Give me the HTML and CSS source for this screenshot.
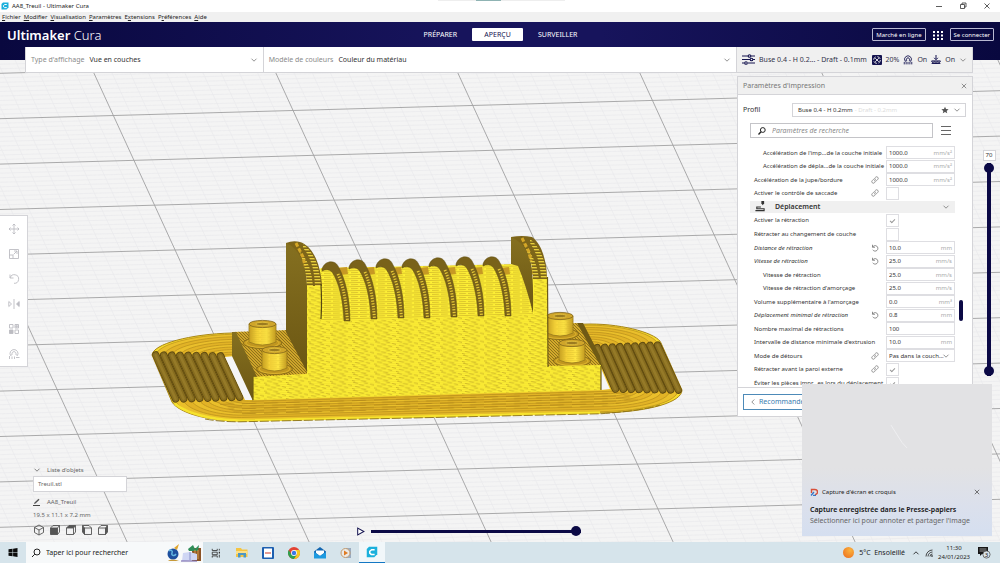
FILE: index.html
```html
<!DOCTYPE html>
<html lang="fr">
<head>
<meta charset="utf-8">
<title>AA8_Treuil - Ultimaker Cura</title>
<link rel="stylesheet" href="styles.css">
</head>
<body>
<svg class="defs" aria-hidden="true">
  <symbol id="chev" viewBox="0 0 8 8"><path d="M1.5 2.7 4 5.2 6.500 2.700" fill="none" stroke="currentColor" stroke-width=".8"/></symbol>
  <symbol id="close" viewBox="0 0 8 8"><path d="M1.800 1.800 6.200 6.200M6.200 1.800 1.800 6.200" fill="none" stroke="currentColor" stroke-width=".8"/></symbol>
  <symbol id="link" viewBox="0 0 16 16"><g fill="none" stroke="currentColor" stroke-width="1.500" stroke-linecap="round"><path d="M6.500 9.500a3 3 0 0 0 4.300 0l2.700-2.700a3 3 0 0 0-4.300-4.300L7.800 3.900"/><path d="M9.500 6.500a3 3 0 0 0-4.300 0L2.500 9.200a3 3 0 0 0 4.300 4.300l1.400-1.400"/></g></symbol>
  <symbol id="undo" viewBox="0 0 16 16"><path d="M3 1.500v5h5M3.300 6.300A5.500 5.500 0 1 1 3.500 11.500" fill="none" stroke="currentColor" stroke-width="1.700"/></symbol>
  <symbol id="cura" viewBox="0 0 16 16"><path d="M4 1h11v10l-4 4H1V4z" fill="#1bb0dc"/><path d="M11.500 5H7.500L5 7v2.500l2 1.700h4.500" fill="none" stroke="#fff" stroke-width="2"/></symbol>
  <symbol id="support" viewBox="0 0 16 16"><path d="M3.500 10a5.500 5.500 0 1 1 9 0L10 8.500a2.500 2.500 0 1 0-4 0zM2 11v4M5 10.500V15M8 11v4M11 10.500V15M14 11v4" fill="none" stroke="currentColor" stroke-width="1.400"/></symbol>
  <symbol id="adhesion" viewBox="0 0 16 16"><path d="M8 0v7M5 4.500 8 7.500 11 4.500M1 9.500c0 5 14 5 14 0zM4 9.500c0 2.500 8 2.500 8 0M1 13.500h14" fill="none" stroke="currentColor" stroke-width="1.600"/></symbol>
</svg>

<header class="titlebar">
  <svg class="ico8"><use href="#cura"/></svg>
  <span>AA8_Treuil - Ultimaker Cura</span>
  <div class="snap"><i></i></div>
  <div class="winbtns">
    <button aria-label="Réduire"><svg viewBox="0 0 8 8"><path d="M1 4.500h6"/></svg></button>
    <button aria-label="Restaurer"><svg viewBox="0 0 8 8"><path d="M1.500 2.500h4v4h-4zM3 2.500V1h4v4H5.500"/></svg></button>
    <button aria-label="Fermer"><svg viewBox="0 0 8 8"><path d="M1.500 1.500l5 5M6.500 1.500l-5 5"/></svg></button>
  </div>
</header>
<nav class="menubar">
  <a href="#"><u>F</u>ichier</a><a href="#"><u>M</u>odifier</a><a href="#"><u>V</u>isualisation</a><a href="#"><u>P</u>aramètres</a><a href="#">E<u>x</u>tensions</a><a href="#">P<u>r</u>éférences</a><a href="#"><u>A</u>ide</a>
</nav>

<div class="mainbar">
  <div class="logo"><b>Ultimaker</b> Cura</div>
  <nav class="stages"><button>PRÉPARER</button><button class="on">APERÇU</button><button>SURVEILLER</button></nav>
  <div class="account">
    <button>Marché en ligne</button>
    <svg class="apps" viewBox="0 0 10 10"><path d="M0 1h2v2H0zM4 1h2v2H4zM8 1h2v2H8zM0 4.500h2v2H0zM4 4.500h2v2H4zM8 4.500h2v2H8zM0 8h2v2H0zM4 8h2v2H4zM8 8h2v2H8z" fill="#fff"/></svg>
    <button>Se connecter</button>
  </div>
</div>

<main class="workspace">
  <svg id="scene" class="scene" viewBox="0 60 1000 483" preserveAspectRatio="xMinYMin slice" role="img" aria-label="Aperçu des couches du modèle"></svg>

  <div class="stagebar">
    <button class="cell view"><span class="muted">Type d'affichage</span><span>Vue en couches</span><svg class="ico8 end"><use href="#chev"/></svg></button>
    <button class="cell colors"><span class="muted">Modèle de couleurs</span><span>Couleur du matériau</span><svg class="ico8 end"><use href="#chev"/></svg></button>
    <button class="cell summary">
      <svg class="sliders" viewBox="0 0 13 11"><path d="M0 2h6M9 2h4M0 5.500h8M11 5.500h2M0 9h2.500M6 9h7" stroke="#14134f" stroke-width="1.200"/><g fill="none" stroke="#14134f" stroke-width="1.100"><circle cx="7.500" cy="2" r="1.300"/><circle cx="9.500" cy="5.500" r="1.300"/><circle cx="4" cy="9" r="1.300"/></g></svg>
      <span class="grow">Buse 0.4 - H 0.2... - Draft - 0.1mm</span>
      <svg class="ico10" viewBox="0 0 10 10"><rect width="10" height="10" rx="1" fill="#14134f"/><g fill="none" stroke="#f0f0f0" stroke-width=".9"><circle cx="5" cy="5" r="3.400" stroke-dasharray="3.600 1.740"/><path d="M3.200 3.200l3.600 3.600M6.800 3.200 3.200 6.800"/></g></svg>
      <span>20%</span>
      <svg class="ico10"><use href="#support"/></svg><span>On</span>
      <svg class="ico10"><use href="#adhesion"/></svg><span>On</span>
      <svg class="ico8"><use href="#chev"/></svg>
    </button>
  </div>

  <section class="left">
    <div class="tools">
      <button aria-label="Déplacer"><svg viewBox="0 0 12 12"><path d="M6 1v10M1 6h10M4.500 2.500 6 1l1.500 1.500M4.500 9.500 6 11l1.500-1.500M2.500 4.500 1 6l1.500 1.500M9.500 4.500 11 6 9.500 7.500"/></svg></button>
      <button aria-label="Mettre à l'échelle"><svg viewBox="0 0 12 12"><path d="M1.500 1.500h9v9h-9zM1.500 7h3.500v3.500M5.500 6.500 9 3M6 3h3v3"/></svg></button>
      <button aria-label="Tourner"><svg viewBox="0 0 12 12"><path d="M2 1.500V5h3.500M2.200 4.800A4.300 4.300 0 1 1 6 10.300"/></svg></button>
      <button aria-label="Miroir"><svg viewBox="0 0 12 12"><path d="M6 1v10M.8 3.500 3.500 6 .8 8.500z"/><path d="M11.200 3.500 8.500 6l2.700 2.500z" fill="#bcbcc2"/></svg></button>
      <button aria-label="Réglages par modèle"><svg viewBox="0 0 12 12"><path d="M1.500 1.500h3.500v3.500H1.500zM7 1.500h3.500v3.500H7zM7 7h3.500v3.500H7zM7 3.200h3.500M8.800 1.500v3.500"/><path d="M1.500 7h3.500v3.500H1.500z" fill="#bcbcc2"/></svg></button>
      <button aria-label="Bloqueur de supports"><svg viewBox="0 0 12 12"><path d="M2.500 7.500a4 4 0 1 1 7 0L7.800 6.500a2 2 0 1 0-3.600 0zM1.500 8v3M4 8.500V11M6.500 8.500V11M8 9.500h3.500"/></svg></button>
    </div>
    <div class="bottomrow">
      <div class="objects">
        <button class="objhead"><svg class="ico8"><use href="#chev"/></svg>Liste d'objets</button>
        <div class="objitem">Treuil.stl</div>
        <div class="objname"><svg class="ico8" viewBox="0 0 8 8"><path d="M0 7.500h7" stroke="#444"/><path d="M1 6 1.500 4.500 5.500.8l1 1-4 3.800z" fill="#555"/></svg>AA8_Treuil</div>
        <div class="dims">19.5 x 11.1 x 7.2 mm</div>
        <div class="cubes">
          <button aria-label="Vue 3D"><svg viewBox="0 0 12 12"><path d="M6 1l4.500 2.500v5L6 11 1.500 8.500v-5zM1.500 3.500 6 6l4.500-2.500M6 6v5"/></svg></button>
          <button aria-label="Vue de face"><svg viewBox="0 0 12 12"><path d="M1.500 4 4 1.500h6.500V8L8.500 10.500M8.500 4l2-2.500"/><path d="M1.500 4h7v6.500h-7z" fill="#555"/></svg></button>
          <button aria-label="Vue du dessus"><svg viewBox="0 0 12 12"><path d="M1.500 4v6.500h7V4M8.500 10.500l2-2.500V1.500"/><path d="M1.500 4 4 1.500h6.500L8.500 4z" fill="#555"/></svg></button>
          <button aria-label="Vue gauche"><svg viewBox="0 0 12 12"><path d="M3.500 4h7v6.500h-7zM1.500 1.500H8L10.500 4"/><path d="M1.500 1.500v6.500l2 2.500V4z" fill="#555"/></svg></button>
          <button aria-label="Vue droite"><svg viewBox="0 0 12 12"><path d="M1.500 4h7v6.500h-7zM1.500 4 4 1.500h6.500"/><path d="M10.500 1.500V8l-2 2.500V4z" fill="#555"/></svg></button>
        </div>
      </div>
      <div class="playbar">
        <button aria-label="Lecture"><svg viewBox="0 0 8 8"><path d="M1.500 1v6L7 4z" fill="#fff" stroke="#14134f" stroke-width=".9"/></svg></button>
        <input type="range" value="100" aria-label="Position dans la couche">
      </div>
    </div>
  </section>

  <section class="panel">
    <h2>Paramètres d'impression<button aria-label="Fermer le panneau"><svg class="ico8"><use href="#close"/></svg></button></h2>
    <div class="profile"><label for="profile">Profil</label>
      <button id="profile">Buse 0.4 - H 0.2mm <span class="ghost">- Draft - 0.2mm</span><svg class="ico8 star" viewBox="0 0 10 10"><path d="M5 .8 6.300 3.700l3.200.3-2.400 2.100.7 3.100L5 7.600 2.200 9.200l.7-3.100L.5 4l3.200-.3z" fill="#555"/></svg><svg class="ico8"><use href="#chev"/></svg></button>
    </div>
    <div class="searchrow">
      <div class="search"><svg class="ico8" viewBox="0 0 8 8"><circle cx="4.800" cy="3" r="2.400" fill="none" stroke="#222"/><path d="M3 4.800.5 7.500" stroke="#222" stroke-width="1.300"/></svg><input type="search" placeholder="Paramètres de recherche" aria-label="Paramètres de recherche"></div>
      <button class="burger" aria-label="Visibilité des paramètres"><svg viewBox="0 0 10 9"><path d="M0 .5h10M0 4.500h10M0 8.500h10" stroke="#666" stroke-width="1"/></svg></button>
    </div>
    <div class="listwrap">
      <div class="list">
        <div class="row sub"><label for="s1">Accélération de l'imp...de la couche initiale</label><div class="field"><input id="s1" value="1000.0"><span>mm/s²</span></div></div>
        <div class="row sub"><label for="s2">Accélération de dépla...de la couche initiale</label><div class="field"><input id="s2" value="1000.0"><span>mm/s²</span></div></div>
        <div class="row"><label for="s3">Accélération de la jupe/bordure</label><svg class="ico8"><use href="#link"/></svg><div class="field"><input id="s3" value="1000.0"><span>mm/s²</span></div></div>
        <div class="row"><label for="s4">Activer le contrôle de saccade</label><svg class="ico8"><use href="#link"/></svg><div class="tick"><input type="checkbox" id="s4"></div></div>
        <button class="category"><svg class="cat" viewBox="0 0 12 12"><path d="M1 10.500h9.500V8.500H2.500V6.500H7" fill="none" stroke="#333" stroke-width="1.200"/><path d="M7.500 0h3v2.500L9 4.500 7.500 2.500z" fill="#333"/></svg>Déplacement<svg class="ico8"><use href="#chev"/></svg></button>
        <div class="row"><label for="s5">Activer la rétraction</label><div class="tick"><input type="checkbox" id="s5" checked></div></div>
        <div class="row"><label for="s6">Rétracter au changement de couche</label><div class="tick"><input type="checkbox" id="s6"></div></div>
        <div class="row changed"><label for="s7">Distance de rétraction</label><svg class="ico8"><use href="#undo"/></svg><div class="field"><input id="s7" value="10.0"><span>mm</span></div></div>
        <div class="row changed"><label for="s8">Vitesse de rétraction</label><svg class="ico8"><use href="#undo"/></svg><div class="field"><input id="s8" value="25.0"><span>mm/s</span></div></div>
        <div class="row sub"><label for="s9">Vitesse de rétraction</label><div class="field"><input id="s9" value="25.0"><span>mm/s</span></div></div>
        <div class="row sub"><label for="s10">Vitesse de rétraction d'amorçage</label><div class="field"><input id="s10" value="25.0"><span>mm/s</span></div></div>
        <div class="row"><label for="s11">Volume supplémentaire à l'amorçage</label><div class="field"><input id="s11" value="0.0"><span>mm³</span></div></div>
        <div class="row changed"><label for="s12">Déplacement minimal de rétraction</label><svg class="ico8"><use href="#undo"/></svg><div class="field"><input id="s12" value="0.8"><span>mm</span></div></div>
        <div class="row"><label for="s13">Nombre maximal de rétractions</label><div class="field"><input id="s13" value="100"></div></div>
        <div class="row"><label for="s14">Intervalle de distance minimale d'extrusion</label><div class="field"><input id="s14" value="10.0"><span>mm</span></div></div>
        <div class="row"><label for="s15">Mode de détours</label><svg class="ico8"><use href="#link"/></svg><div class="field"><select id="s15"><option>Pas dans la couch...</option></select><svg class="ico8 drop"><use href="#chev"/></svg></div></div>
        <div class="row"><label for="s16">Rétracter avant la paroi externe</label><svg class="ico8"><use href="#link"/></svg><div class="tick"><input type="checkbox" id="s16" checked></div></div>
        <div class="row"><label for="s17">Éviter les pièces impr...es lors du déplacement</label><div class="tick"><input type="checkbox" id="s17" checked></div></div>
      </div>
      <div class="scroll"><i></i></div>
    </div>
    <footer><button><svg class="ico8 back"><use href="#chev"/></svg>Recommandé</button></footer>
  </section>

  <aside class="layers">
    <output for="layer">70</output>
    <div class="vtrack"><input id="layer" type="range" min="1" max="70" value="70" aria-label="Couche supérieure"></div>
  </aside>
</main>

<aside class="toast">
  <svg class="shot" viewBox="0 0 190 96" preserveAspectRatio="none"><path d="M89 38l11 16 5 5" stroke="#f1f1f3" stroke-width=".8" fill="none"/></svg>
  <div class="approw"><svg class="ico8" viewBox="0 0 8 8"><path d="M1.500 5V1.500H5a2 2 0 0 1 0 5" fill="none" stroke="#d8503a" stroke-width="1.400"/><path d="M1 7.500 4 4M3 7.500h3" stroke="#3576c8" stroke-width="1.300"/></svg><span>Capture d'écran et croquis</span><button aria-label="Ignorer"><svg class="ico8"><use href="#close"/></svg></button></div>
  <strong>Capture enregistrée dans le Presse-papiers</strong>
  <p>Sélectionner ici pour annoter et partager l'image</p>
</aside>

<footer class="taskbar">
  <button class="start" aria-label="Démarrer"><svg viewBox="0 0 10 10"><path d="M0 1.500 4.500.9v3.800H0zM5.100.8 10 0v4.700H5.100zM0 5.300h4.500v3.800L0 8.500zM5.100 5.300H10V10l-4.900-.8z" fill="#0a0a0a"/></svg></button>
  <div class="tsearch">
    <svg class="ico10" viewBox="0 0 10 10"><circle cx="6" cy="4" r="3" fill="none" stroke="#222"/><path d="M3.800 6.200 1 9" stroke="#222"/></svg>
    <input aria-label="Taper ici pour rechercher" placeholder="Taper ici pour rechercher">
    <svg class="art" viewBox="0 0 38 18"><path d="M9 4l5-4-2 6z" fill="#e0a52e"/><circle cx="8" cy="10" r="5.500" fill="#1d4f9e"/><path d="M4 7c2-2 4 0 3 2s2 4 4 1" stroke="#63b7e2" stroke-width="1.500" fill="none"/><path d="M3 17c3-2 8-1 11 0z" fill="#c79a3a"/><path d="M27 4h9v13h-9z" fill="#8b5426"/><path d="M23 5l5-4 2 4 4-4-1 6h-9z" fill="#2f8d58"/><path d="M30 6v9M33 6v9" stroke="#c99247" stroke-width="1.200"/><path d="M18 9l7-1 7 2v6l-15 1z" fill="#cfd6f4"/><path d="M25 8v8" stroke="#8b93cc"/><path d="M16 17h16" stroke="#6a5ba6"/></svg>
  </div>
  <div class="apprun">
    <button aria-label="Vue des tâches"><svg class="task" viewBox="0 0 12 12"><path d="M1.500 1v2h6V1M1.500 5h6v3h-6zM1.500 11.500v-2h6v2M10 1v2M10 8v3.500" fill="none" stroke="#333"/><path d="M9.300 4.500h1.500v2H9.300z" fill="#333"/></svg></button>
    <button aria-label="Explorateur"><svg viewBox="0 0 12 12"><path d="M0 1h5l1 1.500h5.500V10H0z" fill="#f5c542"/><path d="M0 4h11.500v3H0z" fill="#fbe08a"/><path d="M2 10.500V6h8v4.500H7.500V8h-3v2.500z" fill="#4d97c4"/></svg></button>
    <button aria-label="Agenda"><svg viewBox="0 0 12 12"><rect width="12" height="12" rx="1" fill="#1d5fb0"/><path d="M2 1.500h8v9H2z" fill="#fff"/><path d="M3 6h6" stroke="#d35a4a" stroke-width="1.200"/></svg></button>
    <button aria-label="Chrome"><svg viewBox="0 0 12 12"><circle cx="6" cy="6" r="6" fill="#e24334"/><path d="M.8 3A6 6 0 0 0 6 12l3-4.500L3.400 7.500z" fill="#2ea14f"/><path d="M6 12a6 6 0 0 0 5.200-9H6l3 4.500z" fill="#f8c921"/><circle cx="6" cy="6" r="2.900" fill="#fff"/><circle cx="6" cy="6" r="2.200" fill="#3b78e7"/></svg></button>
    <button aria-label="Courrier"><svg viewBox="0 0 12 12"><path d="M0 4.500 6 0l6 4.500V11H0z" fill="#1466b0"/><path d="M2 3.500h8v2.500L6 9 2 6z" fill="#fff"/><path d="M0 5l6 4 6-4v6.500H0z" fill="#1d9ae0"/></svg></button>
    <button aria-label="Lecteur"><svg viewBox="0 0 12 12"><path d="M6 1h5v10H6z" fill="#9aabc0"/><circle cx="5.500" cy="6" r="4.500" fill="#eceae6" stroke="#c09a70"/><path d="M4 3.500 8 6 4 8.500z" fill="#df7a22"/></svg></button>
    <button class="active" aria-label="Cura"><svg><use href="#cura"/></svg></button>
  </div>
  <div class="tray">
    <i class="sun"></i><span class="weather">5°C&ensp;Ensoleillé</span>
    <svg class="ico8 up"><use href="#chev"/></svg>
    <svg class="ico8" viewBox="0 0 8 8"><path d="M7.500 1A6.500 6.500 0 0 0 1 7.500M7.500 3A4.500 4.500 0 0 0 3 7.500M7.500 5A2.500 2.500 0 0 0 5 7.500" fill="none" stroke="#222" stroke-width=".8"/><circle cx="7" cy="7" r=".8"/></svg>
    <time>11:30<br>24/01/2023</time>
    <button class="notif" aria-label="Notifications"><svg viewBox="0 0 14 13"><path d="M1 1h10v7H5L3 10V8H1z" fill="#161616"/><path d="M2.500 3h7M2.500 5h7" stroke="#ccc" stroke-width=".7"/><circle cx="9.500" cy="8.500" r="3.600" fill="#dbe4e9" stroke="#555" stroke-width=".8"/><text x="9.500" y="10.500" font-size="6" text-anchor="middle" fill="#111">3</text></svg></button>
  </div>
</footer>
<script src="scene.js"></script>
</body>
</html>
```
FILE: styles.css
```css
:root{--navy:#0b0945;--line:#d4d4d8;--text:#333}
*{box-sizing:border-box}
body{margin:0;height:100vh;display:flex;flex-direction:column;overflow:hidden;font:6px/8px "Noto Sans","Open Sans",sans-serif;color:var(--text);background:#f4f4f4}
button,input,select{font:inherit;color:inherit;background:none;border:0;padding:0;margin:0;border-radius:0;min-width:0}
button{display:flex;align-items:center;justify-content:center}
svg{display:block;flex:none}
.defs{position:absolute;width:0;height:0}
.ico8{width:8px;height:8px}
.ico10{width:10px;height:10px}

.titlebar{height:12px;flex:none;display:flex;align-items:center;gap:3px;background:#fff;padding-left:1px;color:#222;position:relative}
.snap{position:absolute;top:0;left:438px;width:127px;height:1px;background:#eee;display:flex;justify-content:center}
.snap i{width:25px;height:1px;background:#8fb3b3;margin-right:26px}
.winbtns{margin-left:auto;display:flex;padding-right:1px}
.winbtns button{width:24px;height:12px}
.winbtns svg{width:8px;height:8px;fill:none;stroke:#333;stroke-width:.8}
.menubar{height:10px;flex:none;background:#f0f0f0;display:flex;align-items:center;gap:3px;padding-left:2px}
.menubar a{color:#222;text-decoration:none}

.mainbar{height:38px;flex:none;padding:0 6px 13px 7px;display:grid;grid-template-columns:1fr auto 1fr;align-items:center;color:#fff;background:linear-gradient(90deg,#09083f,#17145c 45%,#17145c 60%,#09083f)}
.logo{font:300 13px/20px "Noto Sans","Open Sans",sans-serif}
.logo b{font-weight:600}
.stages{display:flex;gap:15px;font-size:7px}
.stages button{height:13px}
.stages .on{background:#fff;color:#14134f;width:51px;border-radius:1px}
.account{display:flex;justify-content:flex-end;align-items:center;gap:7px}
.account button{height:13px;border:1px solid #b9b9d2;border-radius:1px;padding:0 3px}
.apps{width:10px;height:10px}

.workspace{flex:1;min-height:0;position:relative;display:grid;grid-template-columns:1fr 236px 27px;grid-template-rows:12px 1fr}
.scene{position:absolute;inset:0;width:100%;height:100%}
.stagebar{position:relative;grid-column:1/3;margin:-13px 0 0 25px;height:26px;display:grid;grid-template-columns:1fr 2fr 236px;border:1px solid var(--line);border-top:0;background:#fff;font-size:7px;z-index:1}
.cell{padding:0 5px;gap:5px;justify-content:flex-start;text-align:left;white-space:nowrap}
.cell+.cell{border-left:1px solid var(--line)}
.cell .ico8{color:#777}
.cell .end{margin-left:auto}
.muted{color:#8a8a8a}
.summary{background:#f0f0f0;gap:4px;color:#33334a}
.summary .grow{flex:1}
.summary .ico10{color:#14134f}
.sliders{width:13px;height:11px}

.left{position:relative;grid-column:1;grid-row:2;display:flex;flex-direction:column;justify-content:space-between;padding-top:143px}
.tools{width:28px;background:#fff;border:1px solid var(--line);border-left:0;display:grid;grid-auto-rows:25px}
.tools svg{width:12px;height:12px;fill:none;stroke:#bcbcc2;stroke-width:.9}
.bottomrow{display:flex;align-items:flex-end;gap:229px;padding:0 0 6px 33px}
.objects{width:94px;display:grid;color:#666}
.objhead{justify-content:flex-start;gap:6px;height:8px;margin-bottom:2px}
.objitem{height:16px;padding:3px 4px;background:#fff;border:1px solid var(--line)}
.objname{display:flex;align-items:center;gap:6px;height:19px}
.dims{height:13px;line-height:8px}
.cubes{display:flex;gap:4px}
.cubes svg{width:12px;height:12px;fill:none;stroke:#555;stroke-width:.9}
.playbar{display:flex;align-items:center;gap:6px;width:225px}
.playbar svg{width:9px;height:9px}
input[type=range]{appearance:none;height:10px;flex:1;margin:0;background:linear-gradient(var(--navy),var(--navy)) center/100% 3px no-repeat}
input[type=range]::-webkit-slider-thumb{appearance:none;width:10px;height:10px;border-radius:50%;background:var(--navy)}

.panel{position:relative;grid-column:2;grid-row:2;margin-top:4px;height:calc(60vh + 3px);background:#fff;border:1px solid var(--line);display:flex;flex-direction:column}
.panel .ico8{color:#777}
.panel h2{margin:0;height:18px;flex:none;padding:0 4px 0 5px;font:7px/8px "Noto Sans","Open Sans",sans-serif;color:#777;background:#f0f0f0;border-bottom:1px solid var(--line);display:flex;align-items:center;justify-content:space-between}
.profile{display:flex;align-items:center;height:14px;flex:none;margin:8px 6px 0 5px}
.profile label{width:49px;font-size:7px}
.profile button{flex:1;height:14px;border:1px solid var(--line);padding:0 4px 0 5px;justify-content:flex-start;gap:2px}
.ghost{color:#ddd}
.star{margin-left:auto;margin-right:2px}
.searchrow{display:flex;align-items:center;margin:6px 0 0 12px;gap:8px;flex:none}
.search{width:183px;height:15px;border:1px solid #c4c4c8;display:flex;align-items:center;gap:6px;padding-left:7px}
.search input{flex:1;font-size:7px;line-height:9px;height:11px;font-style:italic;outline:0}
.search input::placeholder{color:#8a8a8a}
.burger svg{width:10px;height:9px}
.listwrap{flex:1;min-height:0;overflow:hidden;margin-top:8px;display:grid;grid-template-columns:205px 1fr;padding-left:12px}
.list{height:calc(100% + 3px);display:grid;grid-template-columns:minmax(0,1fr);grid-template-rows:repeat(18,1fr);min-height:0}
.row{display:grid;grid-template-columns:minmax(0,1fr) 15px 69px;align-items:center;padding-left:4px;min-height:0;white-space:nowrap}
.row label{grid-column:1;grid-row:1}
.row>svg{grid-column:2;grid-row:1}
.sub{padding-left:13px}
.changed label{font-style:italic}
.field{grid-column:3;grid-row:1;height:13px;width:69px;border:1px solid #dedee2;padding:0 2px;display:flex;align-items:center}
.field input{flex:1;width:20px;height:9px;outline:0}
.field span{color:#aaa}
.field select{flex:1;appearance:none;height:9px;outline:0}
.drop{margin:0 2px 0 -8px}
.tick{grid-column:3;grid-row:1;width:69px;height:13px}
.tick input{appearance:none;width:13px;height:13px;border:1px solid #dedee2;display:grid;place-items:center}
.tick input:checked::before{content:"";width:4px;height:2px;border:solid #999;border-width:0 0 1px 1px;rotate:-45deg}
.category{background:#f0f0f0;padding:0 5px 0 4px;font-size:7px;font-weight:600;justify-content:flex-start;gap:9px;min-height:0;margin:1px 0}
.category .ico8{margin-left:auto}
.cat{width:12px;height:11px}
.scroll{display:flex;justify-content:flex-start;padding:154px 0 0 4px}
.scroll i{width:4px;height:21px;border-radius:2px;background:var(--navy)}
.panel footer{height:29px;flex:none;border-top:1px solid var(--line);padding:6px 5px;display:flex}
.panel footer button{width:110px;height:16px;border:1px solid #4d8ab8;color:#3a7cb0;font-size:7px;justify-content:flex-start;gap:2px;padding-left:5px}
.back{rotate:90deg}

.layers{position:relative;grid-column:3;grid-row:2;display:flex;flex-direction:column;align-items:center;padding:78px 0 0 5px}
.layers output{border:1px solid var(--line);background:#fff;width:13px;height:11px;text-align:center}
.vtrack{width:10px;height:213px;margin-top:2px;position:relative}
.vtrack input{writing-mode:vertical-lr;direction:rtl;width:10px;height:213px;display:block;background:linear-gradient(var(--navy),var(--navy)) center/4px 100% no-repeat}
.vtrack::after{content:"";position:absolute;left:0;bottom:0;width:10px;height:10px;border-radius:50%;background:var(--navy)}

.toast{position:fixed;right:8px;bottom:27px;width:190px;z-index:3;padding-bottom:9px;background:linear-gradient(#e2e2e4 55%,#dbe0ec 80%,#d5dff0)}
.shot{width:100%;height:104px}
.approw{display:flex;align-items:center;gap:4px;padding:0 11px 0 8px;color:#222}
.approw button{margin-left:auto;color:#555}
.toast strong{display:block;font-size:7px;line-height:10px;font-weight:600;margin:9px 8px 0;color:#111}
.toast p{margin:0 8px;font-size:7px;line-height:12px;color:#666}

.taskbar{height:21px;flex:none;background:#d6e4eb;display:flex;align-items:stretch;color:#222;z-index:2}
.start{width:26px}
.start svg{width:10px;height:9px}
.tsearch{width:177px;background:#f7f9fa;display:flex;align-items:center;padding-left:5px;gap:5px}
.tsearch input{flex:1;font-size:7px;line-height:9px;outline:0}
.tsearch input::placeholder{color:#222}
.art{width:38px;height:18px}
.apprun{display:flex}
.apprun button{width:26px}
.apprun svg{width:12px;height:12px}
.apprun .task{width:10px;height:10px}
.apprun .active{background:#f1f7fa;border-bottom:1px solid #1377c4}
.tray{margin-left:auto;display:flex;align-items:center;gap:5px;padding-right:9px}
.sun{width:11px;height:11px;border-radius:50%;background:radial-gradient(circle at 65% 30%,#fbb23c,#ec6a1c)}
.weather{font-size:7px;margin-right:2px}
.up{rotate:180deg;color:#111}
.tray time{text-align:center;line-height:9px}
.notif{margin-left:2px}
.notif svg{width:14px;height:13px}
```
FILE: scene.js
```js
const svg = document.getElementById('scene');
const out = [];
const P = (d, a) => out.push(`<path d="${d}" ${a}/>`);

// build plate: ten fine cells for each major cell
const kx = 0.459, ky = -0.028;
let minor = '', major = '';
for (let i = -30; i < 60; i++) {
  const x = 93.4 + 18.2 * i, s = `M${x - kx * 12} 60L${x + kx * 471} 543`;
  if (i % 10) minor += s; else major += s;
}
for (let j = -12; j < 120; j++) {
  const y = 73.3 + 4.54 * j, s = `M0 ${y}L1000 ${y + ky * 1000}`;
  if (j % 10) minor += s; else major += s;
}

// brim: rings interpolated between the outer and inner outlines
const outer = [152,355, 153,344,190,334,232,333, 590,324, 625,324,658,334,661,343, 682,390, 682,402,650,412,600,413, 240,421, 205,421,178,412,172,402];
const inner = [225,356, 226,356,228,356,232,356, 590,345, 591,345,592,345,593,346, 611,389, 611,390,610,390,608,390, 250,400, 248,400,245,400,244,400];
const ring = t => outer.map((v, i) => +(v + (inner[i] - v) * t).toFixed(2));
const path = r => `M${r[0]} ${r[1]}C${r.slice(2, 8)}L${r[8]} ${r[9]}C${r.slice(10, 16)}L${r[16]} ${r[17]}C${r.slice(18, 24)}L${r[24]} ${r[25]}C${r.slice(26, 32)}Z`;

out.push(`<defs>
<pattern id="dash" width="22" height="8" patternUnits="userSpaceOnUse" patternTransform="skewY(-1.6)">
<path d="M0 .5h22M0 2.5h22M0 4.500h22M0 6.500h22" stroke="#efdc2d" stroke-width=".6"/>
<path d="M1 .2l5 1.200M12 1l4 .6M7 2.600l5 1M18 2.400l4 1M3 4.400l5 1M14 4.600l4 1M0 6.400l3 .8M9 6.800l5 .8" stroke="#bfa524" stroke-width=".7"/></pattern>
<pattern id="drum" width="9" height="4" patternUnits="userSpaceOnUse" patternTransform="skewY(-1.6)">
<path d="M0 .5h9M0 2.500h7" stroke="#c9ae27" stroke-width=".6"/></pattern>
<pattern id="tick" width="5" height="3" patternUnits="userSpaceOnUse"><path d="M0 .7h5" stroke="#efd53e" stroke-width="1.300"/></pattern>
<pattern id="weave" width="3" height="3" patternUnits="userSpaceOnUse"><path d="M0 0l3 3" stroke="#7f6415" stroke-width=".8"/></pattern>
<pattern id="bricks" width="22" height="5" patternUnits="userSpaceOnUse" patternTransform="skewY(-1.6)"><path d="M0 .5h14M8 3h14" stroke="#b58b1a" stroke-width=".8"/></pattern>
<linearGradient id="dark" x1="0" y1="0" x2="0" y2="1"><stop offset="0" stop-color="#857020"/><stop offset="1" stop-color="#6b5613"/></linearGradient>
<linearGradient id="stud"><stop offset="0" stop-color="#c59c20"/><stop offset=".3" stop-color="#f6d238"/><stop offset=".65" stop-color="#ffe544"/><stop offset="1" stop-color="#c2981f"/></linearGradient>
<clipPath id="brim"><path d="${path(ring(0))}"/></clipPath>
</defs><rect y="60" width="1000" height="483" fill="#f4f4f4"/>`);
P(minor, 'stroke="#eaeaec" stroke-width=".7" fill="none"');
P(major, 'stroke="#a0a0a2" stroke-width=".9" fill="none"');

P(path(ring(0)), 'fill="#f6dc2c" stroke="#a8851a" stroke-width="1"');
for (let k = 0; k < 9; k++) {
  P(path(ring((k + .5) / 9)), `fill="${k % 2 ? '#e2b326' : '#eabf2b'}" stroke="#bd931d" stroke-width=".8"`);
}
P('M215 402L620 391 640 400 600 407 240 415z', 'fill="url(#bricks)"');
out.push('<g clip-path="url(#brim)">');
for (let k = 0; k < 9; k++) {
  const r = ring((k + .45) / 9);
  for (const s of [`M${r[0]} ${r[1]}L${r[30]} ${r[31] - 3}`, `M${r[14]} ${r[15] + 2}L${r[16]} ${r[17]}`]) {
    P(s, 'stroke="#5f4a10" stroke-width="7.600" stroke-linecap="round"');
    P(s, 'stroke="#866c1f" stroke-width="5.800" stroke-linecap="round"');
    P(s, 'stroke="#957a28" stroke-width="2.500" stroke-linecap="round"');
  }
}
out.push('</g>');
P('M225 357L235 356 254 400 245 400z', 'fill="#f5f5f5"');
P('M600 366L610 389 601 390z', 'fill="#f5f5f5"');

// base plate
P('M232 332L290 330 308 374 254 377z', 'fill="#cda42a"');
P('M232 332L290 330 308 374 254 377z', 'fill="url(#weave)"');
P('M232 332L236 332 257 377 253 401 232 356z', 'fill="url(#dark)"');
P('M547 324L577 323 601 366 547 368z', 'fill="#d3aa2b"');
P('M547 324L577 323 601 366 547 368z', 'fill="url(#weave)"');
P('M577 323L583 323 600 356 601 367z', 'fill="#6f5a15"');

// studs
const stud = (x, y, w, h) => {
  const c = x + w / 2, wall = `M${x} ${y}V${y + h - 1}Q${c} ${y + h + 5} ${x + w} ${y + h - 1}V${y}z`;
  out.push(`<ellipse cx="${c}" cy="${y + h}" rx="${w * .72}" ry="5.500" fill="#c0961f" stroke="#8d6f18" stroke-width="1"/><ellipse cx="${c}" cy="${y + h}" rx="${w * .62}" ry="4.500" fill="none" stroke="#e6bd33" stroke-width=".8"/>`);
  P(wall, 'fill="url(#stud)" stroke="#94761a" stroke-width=".8"');
  P(wall, 'fill="url(#drum)" opacity=".45"');
  out.push(`<ellipse cx="${c}" cy="${y}" rx="${w / 2}" ry="3.600" fill="#cfa52a" stroke="#80651a" stroke-width=".8"/><ellipse cx="${c}" cy="${y}" rx="${w / 4}" ry="1.700" fill="#9b7b20" stroke="#f1d046" stroke-width=".7"/>`);
};
stud(249, 324, 27, 19); stud(262, 350, 25, 19);
stud(547, 316, 26, 18); stud(559, 343, 26, 18);

// left cheek, body and right cheek
P('M286 243L293 243C302 252 307 268 307 285L308 374 286 332z', 'fill="url(#dark)"');
P('M307 285L321 268 518 264 533 278 547 277 548 366 601 365 601 390 253 400 253 377 307 374z', 'fill="#fdee35"');
P('M321 268L518 264 533 285 533 314 321 321z', 'fill="url(#drum)"');
P('M307 322L548 314 548 366 601 365 601 390 253 400 253 377 307 374zM307 287h14v36h-14zM534 279h13v38h-13z', 'fill="url(#dash)"');
for (let x = 326; x < 520; x += 27) P(`M${x + 12} 268l9 -1 1 7 -8 1z`, 'fill="#c79924"');
P('M286 243Q293 240 300 242C313 246 321 265 322 286L307 286C307 268 300 248 286 243z', 'fill="#7d6519"');
P('M300 252Q311 262 313 286L307 286Q306 264 297 247zM303 244Q319 256 321 286L315 286Q314 260 303 248z', 'fill="url(#tick)"');
P('M296 243l7 14 2 9', 'stroke="#d5a727" stroke-width="3" fill="none" stroke-dasharray="4 2"');
P('M321 284q1 20 0 35', 'stroke="#554811" stroke-width="1.200" fill="none"');
P('M511 237L520 237C530 248 534 265 533 313Q526 285 518 266L511 264z', 'fill="url(#dark)"');
P('M511 237Q522 235 532 237C542 244 547 262 547 279L533 279C533 260 526 243 511 237z', 'fill="#7d6519"');
P('M526 247Q537 260 539 279L533 279Q532 259 523 243zM530 239Q545 251 547 279L541 279Q540 257 530 243z', 'fill="url(#tick)"');
P('M522 238l7 14 2 9', 'stroke="#d5a727" stroke-width="3" fill="none" stroke-dasharray="4 2"');
P('M547.500 277L548 367M601 366V390M253 377V400', 'stroke="#6d5a15" stroke-width="1.200"');

// drum threads
[332, 359, 386, 412, 439, 466, 493].forEach((x, i) => {
  const y = [262, 260, 259, 259, 258, 257, 257][i];
  P(`M${x - 10} ${y + 7}C${x - 7} ${y - 2} ${x + 3} ${y - 2} ${x + 6} ${y + 4}C${x + 14} ${y + 18} ${x + 18} ${y + 38} ${x + 18} ${y + 59}L${x + 12} ${y + 59}C${x + 11} ${y + 38} ${x + 7} ${y + 20} ${x} ${y + 10}Q${x - 4} ${y + 6} ${x - 10} ${y + 9}z`, 'fill="#79621a" stroke="#5c4a10" stroke-width=".5"');
  P(`M${x + 6} ${y + 12}C${x + 12} ${y + 26} ${x + 14} ${y + 40} ${x + 15.500} ${y + 59}`, 'stroke="#e6c836" stroke-width="3" stroke-dasharray="1.200 1.500" fill="none"');
});
P('M175 404Q195 419 240 420.500L600 412.500', 'stroke="#f7e32e" stroke-width="2.500" fill="none"');
P('M205 419Q220 421.800 240 421.800L600 413.800Q640 411 660 405', 'stroke="#8a7117" stroke-width=".9" fill="none" stroke-dasharray="9 2"');
svg.innerHTML = out.join('');
```
